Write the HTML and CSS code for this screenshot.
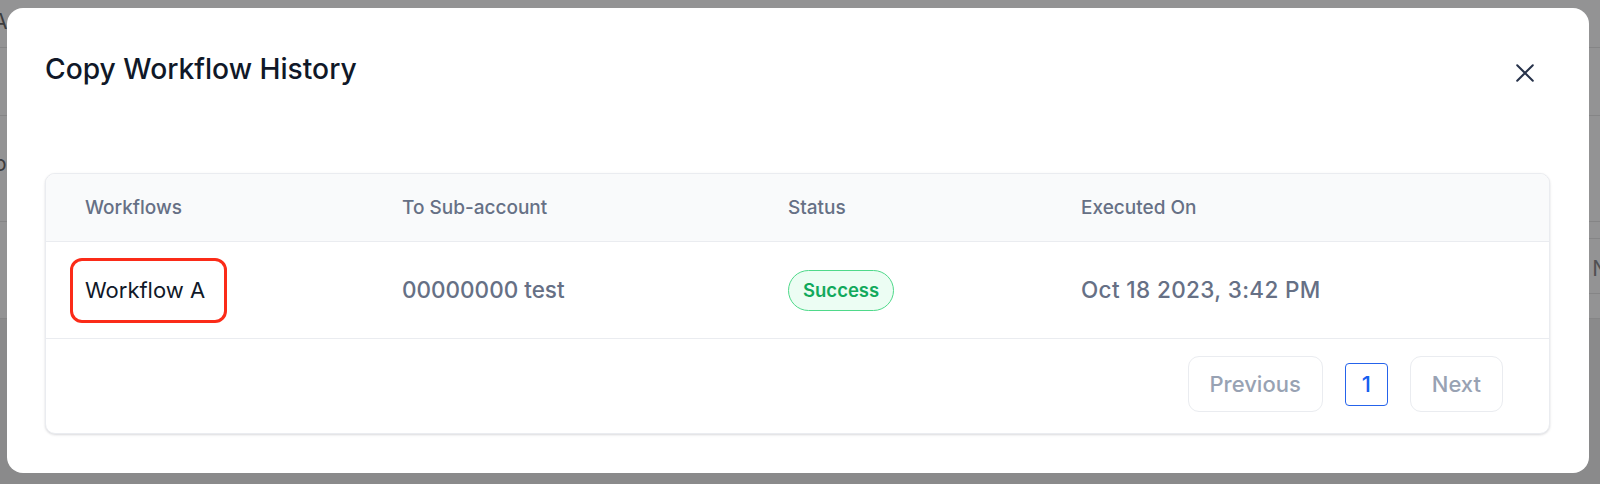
FILE: index.html
```html
<!DOCTYPE html>
<html lang="en">
<head>
<meta charset="utf-8">
<title>Copy Workflow History</title>
<link rel="stylesheet" href="styles.css">
</head>
<body>
  <div class="page" aria-hidden="true">
    <div class="page-row row-a"><span class="ghost ghost-a">A</span></div>
    <div class="page-row row-b"></div>
    <div class="page-row row-c"><span class="ghost ghost-o">o</span></div>
    <div class="page-row row-d">
      <div class="ghost-table"><span class="ghost ghost-n">N</span></div>
    </div>
    <div class="page-rest"></div>
  </div>

  <div class="modal" role="dialog" aria-labelledby="modal-title">
    <div class="modal-header">
      <h2 class="modal-title" id="modal-title">Copy Workflow History</h2>
      <button class="close-btn" type="button" aria-label="Close">
        <svg viewBox="0 0 18 18" width="18" height="18" fill="none" stroke="currentColor" stroke-width="2" stroke-linecap="round">
          <path d="M1.2 1.2 L16.8 16.8 M16.8 1.2 L1.2 16.8"/>
        </svg>
      </button>
    </div>

    <div class="table-card">
      <div class="table-grid table-head">
        <div class="cell th">Workflows</div>
        <div class="cell th">To Sub-account</div>
        <div class="cell th">Status</div>
        <div class="cell th">Executed On</div>
      </div>
      <div class="table-grid table-row">
        <div class="cell td"><span class="wf-name">Workflow A</span></div>
        <div class="cell td">00000000 test</div>
        <div class="cell td"><span class="badge badge-success">Success</span></div>
        <div class="cell td date">Oct 18 2023, 3:42 PM</div>
      </div>
      <div class="table-footer">
        <button class="page-btn" type="button">Previous</button>
        <span class="page-num">1</span>
        <button class="page-btn" type="button">Next</button>
      </div>
    </div>
  </div>
</body>
</html>
```

FILE: styles.css
```css
* {
  box-sizing: border-box;
}

html,
body {
  margin: 0;
  padding: 0;
}

body {
  position: relative;
  width: 1600px;
  height: 484px;
  overflow: hidden;
  font-family: Inter, "Noto Sans", "Liberation Sans", sans-serif;
  background: #8a8a8b;
}

/* dimmed page behind the dialog */
.page {
  display: flex;
  flex-direction: column;
  height: 484px;
}

.page-row {
  flex: none;
  background: #939394;
  border-bottom: 1px solid #858586;
  overflow: hidden;
}

.row-a { height: 48px; }
.row-b { height: 68px; }
.row-c { height: 106px; padding-top: 36px; }
.row-d { height: 97px; }

.page-rest {
  flex: 1;
  background: #8a8a8b;
}

.ghost {
  display: block;
  font-size: 21px;
  line-height: 24px;
  color: #3c3c3e;
}

.ghost-a {
  margin: 10px 0 0 -7px;
}

.ghost-o {
  margin-left: -6px;
}

.ghost-table {
  margin: 16px 0 0 50%;
  height: 56px;
  border-top: 1px solid #858586;
  border-bottom: 1px solid #858586;
  padding-top: 18px;
  display: flex;
  justify-content: flex-end;
}

.ghost-n {
  margin-right: -8px;
  color: #505052;
}

/* dialog */
.modal {
  position: absolute;
  left: 7px;
  top: 8px;
  width: 1582px;
  height: 465px;
  background: #ffffff;
  border-radius: 16px;
  padding: 44px 39px 0 38px;
}

.modal-header {
  display: flex;
  justify-content: space-between;
  align-items: flex-start;
  height: 36px;
}

.modal-title {
  margin: 0;
  font-size: 28.2px;
  line-height: 34px;
  font-weight: 500;
  color: #101828;
}

.close-btn {
  width: 18px;
  height: 18px;
  margin: 12px 16px 0 0;
  padding: 0;
  border: 0;
  background: none;
  color: #27324a;
  display: block;
}

.close-btn svg {
  display: block;
}

.table-card {
  margin-top: 85px;
  border: 1px solid #eaecf0;
  border-radius: 10px;
  background: #ffffff;
  box-shadow: 0 1px 3px rgba(16, 24, 40, 0.10), 0 1px 2px rgba(16, 24, 40, 0.06);
  overflow: hidden;
}

.table-grid {
  display: grid;
  grid-template-columns: 317px 386px 293px 1fr;
  align-items: center;
  border-bottom: 1px solid #eaecf0;
}

.table-head {
  height: 68px;
  background: #f9fafb;
}

.table-row {
  height: 97px;
}

.cell {
  padding-left: 39px;
}

.th {
  font-size: 19px;
  line-height: 24px;
  font-weight: 500;
  color: #667085;
}

.td {
  font-size: 22.5px;
  line-height: 28px;
  font-weight: 500;
  color: #667085;
}

.date {
  letter-spacing: 0.37px;
}

.wf-name {
  position: relative;
  display: inline-block;
  font-size: 22px;
  color: #101828;
  font-weight: 400;
}

.wf-name::after {
  content: "";
  position: absolute;
  top: -18px;
  bottom: -19px;
  left: -15px;
  right: -22px;
  border: 3px solid #fb2b18;
  border-radius: 12px;
}

.badge {
  display: inline-block;
  height: 41px;
  padding: 0 14px;
  border-radius: 999px;
  font-size: 18.5px;
  line-height: 39px;
  font-weight: 600;
  letter-spacing: 0;
}

.badge-success {
  background: #ecfdf3;
  border: 1px solid #4fd98a;
  color: #12a95c;
}

.table-footer {
  display: flex;
  justify-content: flex-end;
  align-items: center;
  gap: 22px;
  height: 94px;
  padding: 17px 46px 21px 0;
}

.page-btn {
  height: 56px;
  padding: 0 21px;
  border: 1px solid #eaecf0;
  border-radius: 11px;
  background: #ffffff;
  font-family: inherit;
  font-size: 22px;
  font-weight: 500;
  color: #98a2b3;
}

.page-num {
  width: 43px;
  height: 43px;
  display: flex;
  align-items: center;
  justify-content: center;
  border: 1.5px solid #2563eb;
  border-radius: 4px;
  font-size: 22px;
  font-weight: 500;
  color: #155eef;
}
```
